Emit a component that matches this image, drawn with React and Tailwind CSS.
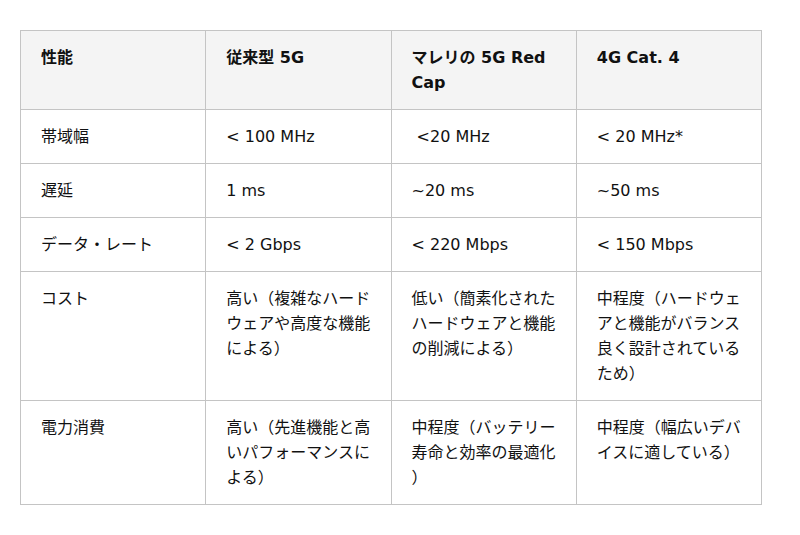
export default function App() {
  const header = ["性能", "従来型 5G", "マレリの 5G Red Cap", "4G Cat. 4"];
  const rows = [
    ["帯域幅", "< 100 MHz", "\u00a0<20 MHz", "< 20 MHz*"],
    ["遅延", "1 ms", "~20 ms", "~50 ms"],
    ["データ・レート", "< 2 Gbps", "< 220 Mbps", "< 150 Mbps"],
    [
      "コスト",
      "高い（複雑なハードウェアや高度な機能による）",
      "低い（簡素化されたハードウェアと機能の削減による）",
      "中程度（ハードウェアと機能がバランス良く設計されているため）",
    ],
    [
      "電力消費",
      "高い（先進機能と高いパフォーマンスによる）",
      "中程度（バッテリー寿命と効率の最適化）",
      "中程度（幅広いデバイスに適している）",
    ],
  ];
  return (
    <div
      className="w-[800px] h-[535px] bg-white pt-[30px] pl-[20px] text-[#111111]"
      style={{ fontFamily: '"DejaVu Sans", "Noto Sans CJK JP", sans-serif' }}
    >
      <table className="w-[742px] table-fixed border-collapse border border-[#e6e6e6] text-[16px] leading-[25px]">
        <thead>
          <tr className="bg-[#f4f4f4]">
            {header.map((h, i) => (
              <th
                key={i}
                className="border border-[#c4c4c4] pl-[20px] pr-[14px] pt-[14px] pb-[14px] text-left align-top font-bold"
              >
                {h}
              </th>
            ))}
          </tr>
        </thead>
        <tbody>
          {rows.map((r, ri) => (
            <tr key={ri}>
              {r.map((c, ci) => (
                <td
                  key={ci}
                  className="border border-[#c4c4c4] pl-[20px] pr-[14px] pt-[14px] pb-[14px] align-top font-normal [line-break:anywhere]"
                >
                  {c}
                </td>
              ))}
            </tr>
          ))}
        </tbody>
      </table>
    </div>
  );
}
